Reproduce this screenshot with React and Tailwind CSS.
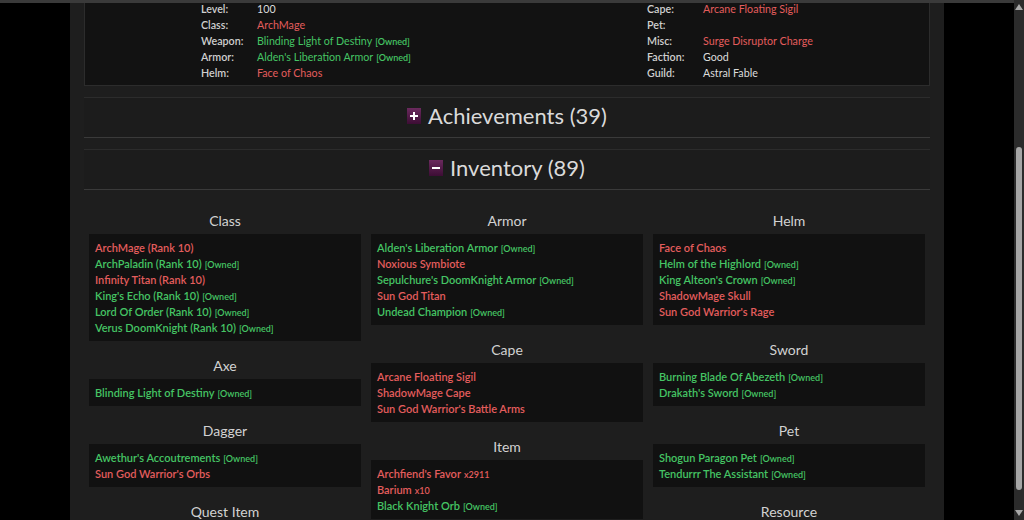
import React from "react";

const RED = "text-[#e35d5d]";
const GREEN = "text-[#45c464]";

function Val({ v }) {
  if (!v) return null;
  const cls = v.c === "r" ? RED : v.c === "g" ? GREEN : "text-[#dcdcdc]";
  return (
    <span className={cls}>
      {v.t}
      {v.o && <span className="ml-[3px] text-[9px] font-semibold">[Owned]</span>}
    </span>
  );
}

const leftRows = [
  ["Level:", { t: "100", c: "w" }],
  ["Class:", { t: "ArchMage", c: "r" }],
  ["Weapon:", { t: "Blinding Light of Destiny", c: "g", o: true }],
  ["Armor:", { t: "Alden's Liberation Armor", c: "g", o: true }],
  ["Helm:", { t: "Face of Chaos", c: "r" }],
];
const rightRows = [
  ["Cape:", { t: "Arcane Floating Sigil", c: "r" }],
  ["Pet:", null],
  ["Misc:", { t: "Surge Disruptor Charge", c: "r" }],
  ["Faction:", { t: "Good", c: "w" }],
  ["Guild:", { t: "Astral Fable", c: "w" }],
];

const columns = [
  [
    {
      h: "Class",
      items: [
        { t: "ArchMage (Rank 10)", c: "r" },
        { t: "ArchPaladin (Rank 10)", c: "g", o: true },
        { t: "Infinity Titan (Rank 10)", c: "r" },
        { t: "King's Echo (Rank 10)", c: "g", o: true },
        { t: "Lord Of Order (Rank 10)", c: "g", o: true },
        { t: "Verus DoomKnight (Rank 10)", c: "g", o: true },
      ],
    },
    { h: "Axe", items: [{ t: "Blinding Light of Destiny", c: "g", o: true }] },
    {
      h: "Dagger",
      items: [
        { t: "Awethur's Accoutrements", c: "g", o: true },
        { t: "Sun God Warrior's Orbs", c: "r" },
      ],
    },
    { h: "Quest Item", items: [] },
  ],
  [
    {
      h: "Armor",
      items: [
        { t: "Alden's Liberation Armor", c: "g", o: true },
        { t: "Noxious Symbiote", c: "r" },
        { t: "Sepulchure's DoomKnight Armor", c: "g", o: true },
        { t: "Sun God Titan", c: "r" },
        { t: "Undead Champion", c: "g", o: true },
      ],
    },
    {
      h: "Cape",
      items: [
        { t: "Arcane Floating Sigil", c: "r" },
        { t: "ShadowMage Cape", c: "r" },
        { t: "Sun God Warrior's Battle Arms", c: "r" },
      ],
    },
    {
      h: "Item",
      items: [
        { t: "Archfiend's Favor", c: "r", q: "x2911" },
        { t: "Barium", c: "r", q: "x10" },
        { t: "Black Knight Orb", c: "g", o: true },
      ],
    },
  ],
  [
    {
      h: "Helm",
      items: [
        { t: "Face of Chaos", c: "r" },
        { t: "Helm of the Highlord", c: "g", o: true },
        { t: "King Alteon's Crown", c: "g", o: true },
        { t: "ShadowMage Skull", c: "r" },
        { t: "Sun God Warrior's Rage", c: "r" },
      ],
    },
    {
      h: "Sword",
      items: [
        { t: "Burning Blade Of Abezeth", c: "g", o: true },
        { t: "Drakath's Sword", c: "g", o: true },
      ],
    },
    {
      h: "Pet",
      items: [
        { t: "Shogun Paragon Pet", c: "g", o: true },
        { t: "Tendurrr The Assistant", c: "g", o: true },
      ],
    },
    { h: "Resource", items: [] },
  ],
];

function Item({ it }) {
  return (
    <div className={`flex h-[16px] items-baseline text-[11px] font-semibold leading-[16px] ${it.c === "r" ? RED : GREEN}`}>
      <span>{it.t}</span>
      {it.q && <span className="ml-[3px] text-[9px]">{it.q}</span>}
      {it.o && <span className="ml-[3px] text-[9px]">[Owned]</span>}
    </div>
  );
}

function Toggle({ plus }) {
  return (
    <span className="flex h-[16px] w-[14px] items-center justify-center bg-gradient-to-b from-[#6b2a5e] to-[#3d0d35]">
      {plus ? (
        <svg width="8" height="8" viewBox="0 0 8 8">
          <path d="M4 0v8M0 4h8" stroke="#fff" strokeWidth="2" />
        </svg>
      ) : (
        <svg width="8" height="8" viewBox="0 0 8 8">
          <path d="M0 4h8" stroke="#fff" strokeWidth="2" />
        </svg>
      )}
    </span>
  );
}

function Row({ l, v }) {
  return (
    <div className="flex h-[16px] items-baseline leading-[16px]">
      <span className="w-[56px] shrink-0 font-semibold text-[#cfcfcf]">{l}</span>
      <Val v={v} />
    </div>
  );
}

export default function App() {
  return (
    <div className="relative flex h-[520px] w-[1024px] overflow-hidden bg-black font-['Lato','Noto_Sans',sans-serif]">
      <div className="absolute left-0 right-[10px] top-0 h-[3px] bg-[#3a3a3a]" />
      <div className="w-[70px] shrink-0" />
      <div className="w-[874px] shrink-0 bg-[#1e1e1e] px-[14px]">
        {/* character card */}
        <div className="border border-t-0 border-[#2c2c2c] bg-[#121212] pb-[4px] pl-[116px] pt-[1px] text-[10.7px]">
          <div className="flex">
            <div className="w-[446px]">
              {leftRows.map(([l, v]) => (
                <Row key={l} l={l} v={v} />
              ))}
            </div>
            <div>
              {rightRows.map(([l, v]) => (
                <Row key={l} l={l} v={v} />
              ))}
            </div>
          </div>
        </div>

        <div className="mt-[11px] flex h-[41px] items-center justify-center gap-[7px] border-y border-t-[#2c2c2c] border-b-[#3a3a3a] bg-[#1c1c1c] pb-[3px]">
          <Toggle plus />
          <span className="text-[22px] leading-[28px] text-[#dadada]">Achievements (39)</span>
        </div>
        <div className="mt-[11px] flex h-[41px] items-center justify-center gap-[7px] border-y border-t-[#2c2c2c] border-b-[#3a3a3a] bg-[#1c1c1c] pb-[3px]">
          <Toggle />
          <span className="text-[22px] leading-[28px] text-[#dadada]">Inventory (89)</span>
        </div>

        <div className="mt-[21px] grid grid-cols-3 gap-[10px] px-[5px]">
          {columns.map((col, ci) => (
            <div key={ci} className="flex flex-col">
              {col.map((sec, si) => (
                <div key={sec.h} className={si > 0 ? "mt-[15px]" : ""}>
                  <div className="mb-[3px] text-center text-[14px] leading-[20px] text-[#d2d2d2]">{sec.h}</div>
                  <div className="min-h-[27px] bg-[#111111] px-[6px] pb-[5px] pt-[6px]">
                    {sec.items.map((it) => (
                      <Item key={it.t} it={it} />
                    ))}
                  </div>
                </div>
              ))}
            </div>
          ))}
        </div>
      </div>
      <div className="w-[70px] shrink-0" />
      <div className="flex w-[10px] shrink-0 flex-col items-center bg-[#2b2b2b]">
        <svg width="8" height="6" viewBox="0 0 8 6" className="mt-[4px]">
          <path d="M4 0L8 6H0z" fill="#a8a8a8" />
        </svg>
        <div className="mt-[137px] h-[343px] w-[6px] rounded-full bg-[#a6a6a6]" />
        <div className="flex-1" />
        <svg width="8" height="6" viewBox="0 0 8 6" className="mb-[4px]">
          <path d="M0 0H8L4 6z" fill="#a8a8a8" />
        </svg>
      </div>
    </div>
  );
}
